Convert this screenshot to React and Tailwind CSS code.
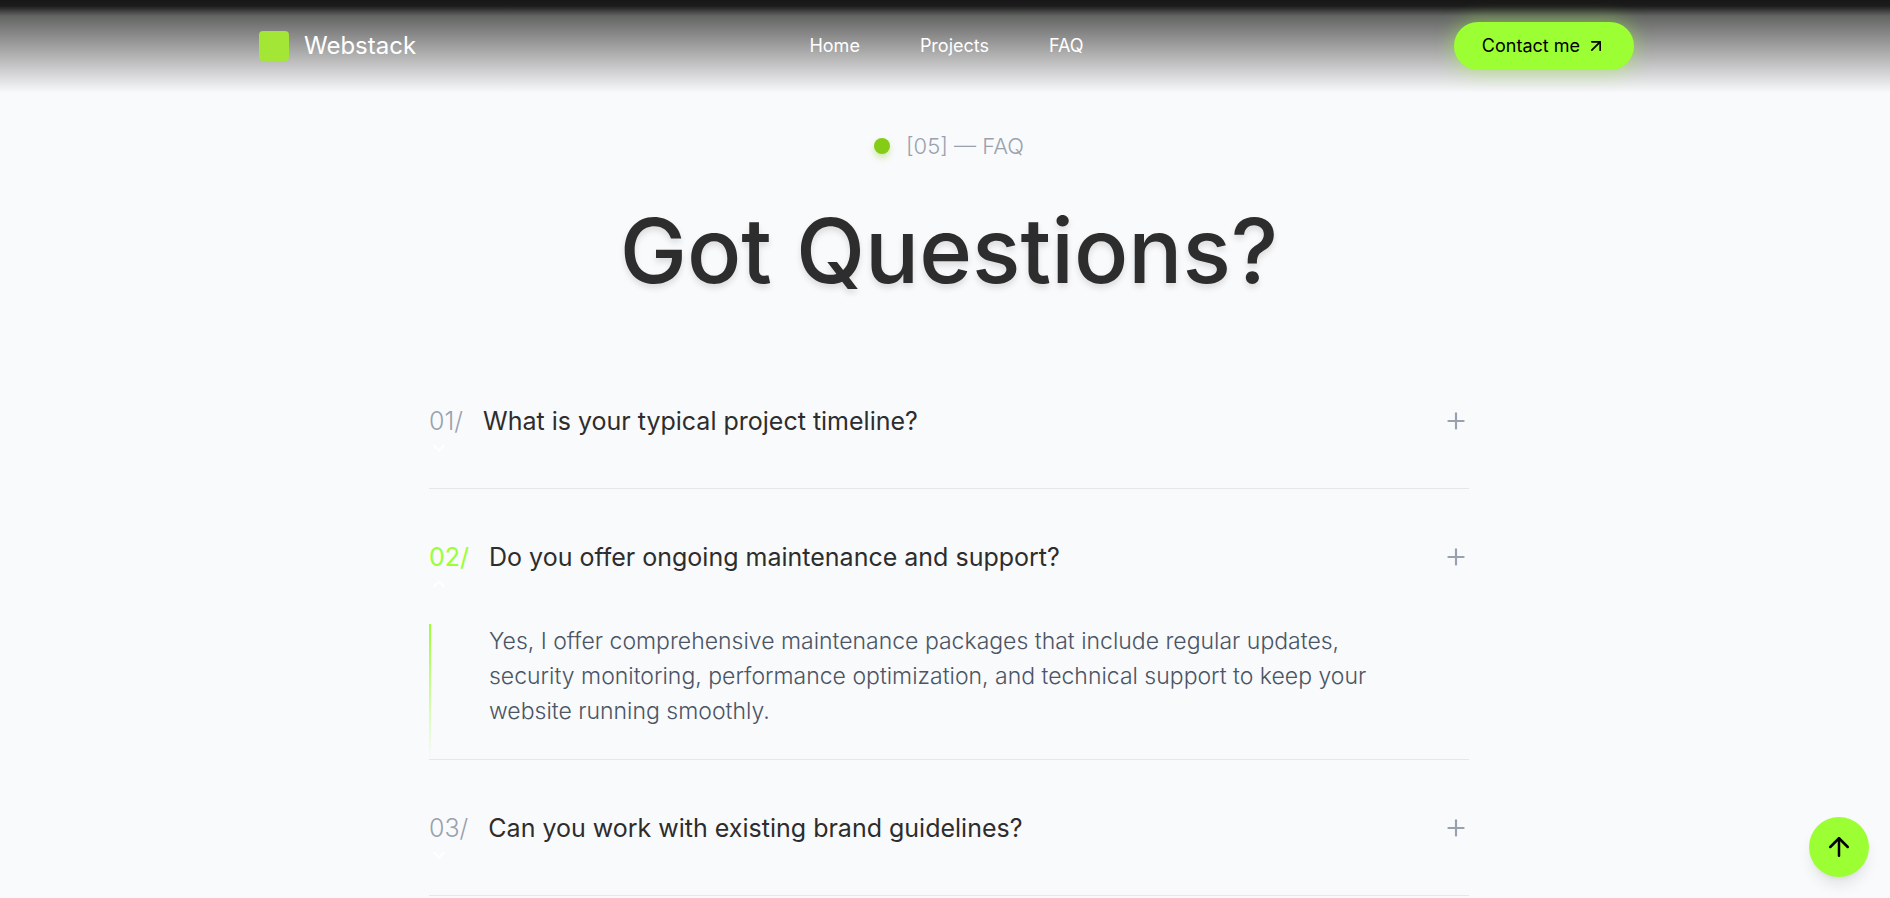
import React, { useState } from "react";
import { ArrowUp, ArrowUpRight, ChevronDown, ChevronUp, Plus } from "lucide-react";

const links = ["Home", "Projects", "FAQ"];

const questions = [
  {
    question: "What is your typical project timeline?",
    answer: "Most projects take between four and eight weeks from kickoff to launch.",
  },
  {
    question: "Do you offer ongoing maintenance and support?",
    answer:
      "Yes, I offer comprehensive maintenance packages that include regular updates, security monitoring, performance optimization, and technical support to keep your website running smoothly.",
  },
  {
    question: "Can you work with existing brand guidelines?",
    answer: "Absolutely. I can follow your existing guidelines or help extend them.",
  },
];

const Navbar = () => (
  <header className="fixed inset-x-0 top-0 z-20 h-24 bg-[linear-gradient(to_bottom,#171717_0px,#1c1c1c_6px,#636563_16px,#9b9b9b_44px,#f9fafc_93px)] px-64">
    <div className="flex h-[91px] items-center justify-between pl-[3px]">
      <a href="#home" className="flex flex-1 items-center gap-[15px] text-2xl text-white">
        <span className="size-[30px] rounded-[4px] bg-[#a3e635]" />
        Webstack
      </a>
      <nav className="flex gap-[60px] text-lg text-white">
        {links.map((link) => (
          <a key={link} href={`#${link.toLowerCase()}`}>{link}</a>
        ))}
      </nav>
      <div className="flex flex-1 justify-end">
        <button className="flex h-12 items-center gap-1.5 rounded-full bg-[#9bff33] px-7 text-lg text-black shadow-[0_0_20px_rgba(155,255,51,0.5)]">
          Contact me
          <ArrowUpRight size={20} />
        </button>
      </div>
    </div>
  </header>
);

const FaqItem = ({ index, item, open, onToggle }) => (
  <li className="border-b border-gray-200">
    <button onClick={onToggle} aria-expanded={open} className="flex h-[135px] w-full justify-between pt-[51px] text-left">
      <span>
        <span className="flex gap-5 text-[25px] leading-[34px]">
          <span className={open ? "text-[#9bff33]" : "font-light text-gray-400"}>0{index + 1}/</span>
          <span className="text-[#2d2d2d]">{item.question}</span>
        </span>
        {open ? (
          <ChevronUp size={20} strokeWidth={2.5} className="text-white" />
        ) : (
          <ChevronDown size={20} strokeWidth={2.5} className="text-white" />
        )}
      </span>
      <Plus size={26} className="mt-1 text-gray-400" />
    </button>
    {open && (
      <div className="relative pb-[30px] pl-[60px]">
        <span className="absolute inset-y-0 left-0 w-0.5 bg-linear-to-b from-[#9bff33] to-transparent" />
        <p className="max-w-[910px] text-[23px] leading-[35px] font-light text-gray-600">{item.answer}</p>
      </div>
    )}
  </li>
);

const App = () => {
  const [openIndex, setOpenIndex] = useState(1);

  return (
    <div className="h-screen overflow-hidden bg-[#f9fafc] pl-2 font-['Inter',sans-serif]">
      <Navbar />
      <main className="mx-auto max-w-[1040px] pt-32">
        <div className="flex items-center justify-center gap-4 text-[22px] leading-9 font-light text-gray-400">
          <span className="size-4 rounded-full bg-[#84cc16] shadow-[0_4px_6px_rgba(132,204,22,0.35)]" />
          [05] — FAQ
        </div>
        <h1 className="mt-8 text-center text-[90px] leading-[109px] font-medium text-[#2d2d2d] text-shadow-[0_4px_6px_rgba(0,0,0,0.12)]">
          Got Questions?
        </h1>
        <ul className="mt-12">
          {questions.map((item, i) => (
            <FaqItem
              key={item.question}
              index={i}
              item={item}
              open={openIndex === i}
              onToggle={() => setOpenIndex(openIndex === i ? -1 : i)}
            />
          ))}
        </ul>
      </main>
      <button aria-label="Back to top" className="fixed right-[21px] bottom-[21px] flex size-[60px] items-center justify-center rounded-full bg-[#9bff33] text-black shadow-lg">
        <ArrowUp size={30} />
      </button>
    </div>
  );
};

export default App;
